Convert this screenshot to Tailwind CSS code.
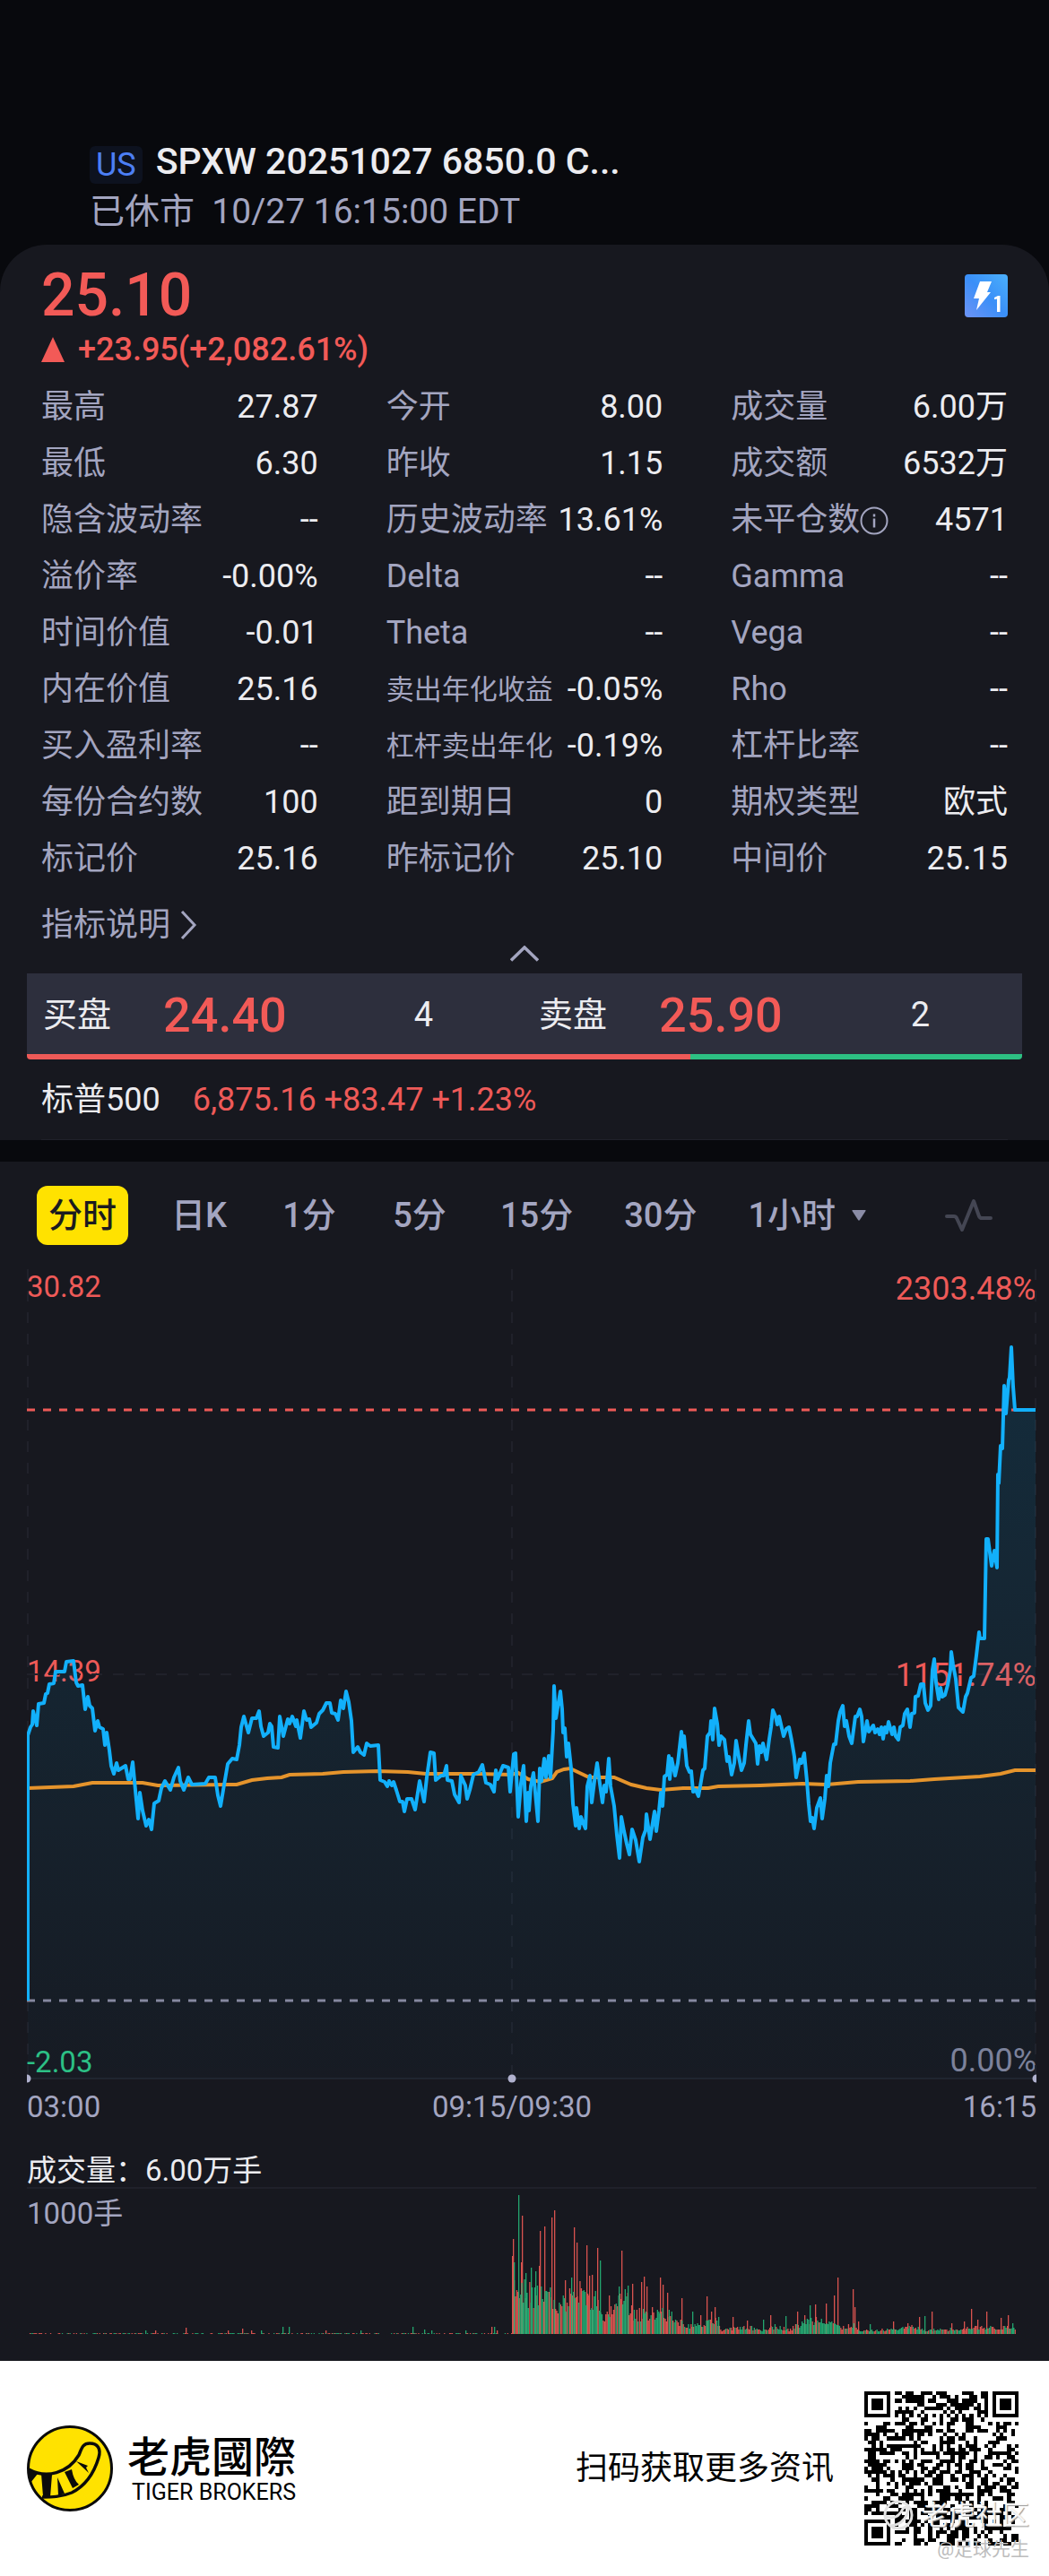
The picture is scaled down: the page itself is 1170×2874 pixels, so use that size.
<!DOCTYPE html>
<html lang="zh-CN">
<head>
    <meta charset="UTF-8">
    <meta name="viewport" content="width=device-width, initial-scale=1.0">
    <title>SPXW 20251027 6850.0 Call</title>
    <script src="https://cdn.jsdelivr.net/npm/@tailwindcss/browser@4"></script>
</head>
<body class="bg-[#08090d] text-[#ececf0] font-['Roboto','Noto_Sans_CJK_SC',sans-serif]">

    <!-- Header -->
    <header class="pt-[155px] pb-[15px] px-[100px]">
        <div class="flex items-end gap-[15px] h-[50px]">
            <span class="flex items-center h-[42px] px-[7px] rounded-md bg-[#0d121f] text-[#4c7ff5] text-[36px]">US</span>
            <h1 class="text-[41px] leading-[50px] font-medium">SPXW 20251027 6850.0 C...</h1>
        </div>
        <p class="mt-[9px] text-[39px] leading-[44px] text-[#a3a5c0] whitespace-pre">已休市  10/27 16:15:00 EDT</p>
    </header>

    <main>
        <!-- Quote card -->
        <section class="rounded-t-[52px] bg-[#17181f] pt-[21px]">
            <div class="px-[46px]">
                <div class="flex items-center justify-between">
                    <p class="text-[66px] leading-[72px] font-medium text-[#f25a57]">25.10</p>
                    <svg class="w-12 h-12" viewBox="0 0 48 48">
                        <defs>
                            <linearGradient id="quoteLevel" x1="0" y1="1" x2="1" y2="0">
                                <stop offset="0" stop-color="#6d93f5"/>
                                <stop offset="0.5" stop-color="#3a8ff8"/>
                                <stop offset="1" stop-color="#4bb0fb"/>
                            </linearGradient>
                        </defs>
                        <rect width="48" height="48" rx="4" fill="url(#quoteLevel)"/>
                        <path d="M17 8h13l-5 12h4L13 40l3-13H10z" fill="#fff"/>
                        <path d="M33 26l4-2h2.500v18H36V27.500l-3 .5z" fill="#fff"/>
                    </svg>
                </div>
                <p class="flex items-center gap-[15px] text-[36px] leading-[48px] font-medium text-[#f25a57]">
                    <svg class="w-[26px] h-7" viewBox="0 0 26 28"><path d="M13 0l13 28H0z" fill="currentColor"/></svg>
                    +23.95(+2,082.61%)
                </p>

                <dl class="mt-[9px] grid grid-cols-3 gap-x-[76px] text-[36px] leading-[63px] whitespace-nowrap [&>div]:flex [&>div]:items-center [&>div]:justify-between [&_dt]:text-[#a3a5c0]">
                    <div><dt>最高</dt><dd>27.87</dd></div>
                    <div><dt>今开</dt><dd>8.00</dd></div>
                    <div><dt>成交量</dt><dd>6.00万</dd></div>
                    <div><dt>最低</dt><dd>6.30</dd></div>
                    <div><dt>昨收</dt><dd>1.15</dd></div>
                    <div><dt>成交额</dt><dd>6532万</dd></div>
                    <div><dt>隐含波动率</dt><dd>--</dd></div>
                    <div><dt>历史波动率</dt><dd>13.61%</dd></div>
                    <div>
                        <dt class="flex items-center">未平仓数
                            <svg class="w-8 h-8" viewBox="0 0 32 32" fill="none" stroke="currentColor" stroke-width="2">
                                <circle cx="16" cy="16" r="14.500"/>
                                <path d="M16 13.500v10M16 8.500v3" stroke-width="2.500"/>
                            </svg>
                        </dt>
                        <dd>4571</dd>
                    </div>
                    <div><dt>溢价率</dt><dd>-0.00%</dd></div>
                    <div><dt>Delta</dt><dd>--</dd></div>
                    <div><dt>Gamma</dt><dd>--</dd></div>
                    <div><dt>时间价值</dt><dd>-0.01</dd></div>
                    <div><dt>Theta</dt><dd>--</dd></div>
                    <div><dt>Vega</dt><dd>--</dd></div>
                    <div><dt>内在价值</dt><dd>25.16</dd></div>
                    <div><dt class="text-[31px]">卖出年化收益</dt><dd>-0.05%</dd></div>
                    <div><dt>Rho</dt><dd>--</dd></div>
                    <div><dt>买入盈利率</dt><dd>--</dd></div>
                    <div><dt class="text-[31px]">杠杆卖出年化</dt><dd>-0.19%</dd></div>
                    <div><dt>杠杆比率</dt><dd>--</dd></div>
                    <div><dt>每份合约数</dt><dd>100</dd></div>
                    <div><dt>距到期日</dt><dd>0</dd></div>
                    <div><dt>期权类型</dt><dd>欧式</dd></div>
                    <div><dt>标记价</dt><dd>25.16</dd></div>
                    <div><dt>昨标记价</dt><dd>25.10</dd></div>
                    <div><dt>中间价</dt><dd>25.15</dd></div>
                </dl>

                <a href="#" class="mt-[19px] inline-flex items-center gap-2.5 h-[46px] text-[36px] leading-[46px] text-[#a3a5c0] align-top">
                    指标说明
                    <svg class="w-5 h-8" viewBox="0 0 20 32" fill="none" stroke="currentColor" stroke-width="3"><path d="M3 1l14 15L3 31"/></svg>
                </a>
            </div>
            <button type="button" aria-label="收起" class="block mx-auto mb-[13px] text-[#a3a5c0]">
                <svg class="block w-8 h-[18px]" viewBox="0 0 32 18" fill="none" stroke="currentColor" stroke-width="3.500"><path d="M1 16.500L16 2l15 14.500"/></svg>
            </button>

            <!-- Bid / ask -->
            <div class="mx-[30px] rounded-b-sm overflow-hidden">
                <div class="grid grid-cols-2 h-[90px] pt-0.5 bg-[#2d2f3d] text-[38px]">
                    <div class="flex items-center pl-[18px]">
                        <span class="w-[134px]">买盘</span>
                        <span class="text-[54px] font-medium text-[#f25a57]">24.40</span>
                        <span class="flex-1 pl-10 text-center">4</span>
                    </div>
                    <div class="flex items-center pl-4">
                        <span class="w-[134px]">卖盘</span>
                        <span class="text-[54px] font-medium text-[#f25a57]">25.90</span>
                        <span class="flex-1 pl-10 text-center">2</span>
                    </div>
                </div>
                <div class="flex h-1.5">
                    <div class="w-2/3 bg-[#ee5a58]"></div>
                    <div class="w-1/3 bg-[#2dc083]"></div>
                </div>
            </div>

            <p class="mx-[46px] flex gap-9 border-b border-[#20212a] pt-0.5 text-[36px] leading-[87px]">
                <span>标普500</span>
                <span class="text-[#ee5a58]">6,875.16 +83.47 +1.23%</span>
            </p>
        </section>

        <!-- Chart -->
        <section class="mt-6 bg-[#17181f] pt-[27px] pb-[30px] pl-[30px] pr-[14px]">
            <nav class="flex items-center justify-between pl-[11px] pr-[49px] text-[38px] font-medium text-[#a3a5c0]">
                <div class="flex items-center gap-[57px]">
                    <button type="button" class="h-[66px] w-[102px] -mr-[11px] rounded-[12px] bg-[#ffe200] text-[#1b1b1f]">分时</button>
                    <button type="button" class="min-w-[66px]">日K</button>
                    <button type="button" class="min-w-[66px]">1分</button>
                    <button type="button" class="min-w-[66px]">5分</button>
                    <button type="button">15分</button>
                    <button type="button">30分</button>
                    <button type="button" class="flex items-center gap-[18px]">1小时
                        <svg class="w-4 h-3" viewBox="0 0 16 12"><path d="M1 0h14q1 0 .5 1L9 11q-1 1.500-2 0L.5 1Q0 0 1 0z" fill="#8a8ca6"/></svg>
                    </button>
                </div>
                <button type="button" aria-label="指标">
                    <svg class="w-[53px] h-9" viewBox="0 0 53 36" fill="none" stroke="#444653" stroke-width="4" stroke-linejoin="round" stroke-linecap="round"><path d="M2 19h8q2 0 3 2l6 13L32 2l6 17q1 2 3 2h10"/></svg>
                </button>
            </nav>

            <div class="relative mt-[27px]">
                <div class="absolute inset-x-0 top-0 bottom-[3px] flex justify-between text-[#ee5a58]">
                    <div class="flex flex-col justify-between text-[33px] leading-[40px]">
                        <span>30.82</span>
                        <span class="pb-2">14.39</span>
                        <span class="text-[#2dc083]">-2.03</span>
                    </div>
                    <div class="flex flex-col justify-between text-right text-[36px] leading-[44px]">
                        <span>2303.48%</span>
                        <span>1151.74%</span>
                        <span class="text-[#7f8199]">0.00%</span>
                    </div>
                </div>
                <svg class="relative block w-full" viewBox="0 0 1126 908" fill="none">
                    <defs>
                        <linearGradient id="areaFill" gradientUnits="userSpaceOnUse" x1="0" y1="87" x2="0" y2="903">
                            <stop offset="0" stop-color="#00aaf0" stop-opacity="0.14"/>
                            <stop offset="1" stop-color="#00aaf0" stop-opacity="0.02"/>
                        </linearGradient>
                    </defs>
                    <g stroke="#20212a" stroke-width="2" stroke-dasharray="12 12">
                        <path d="M1 0V903M541 0V903M1125 0V903M0 452H1126"/>
                    </g>
                    <path d="M0 903H1126" stroke="#20242e" stroke-width="2"/>
                    <path id="area" fill="url(#areaFill)"/>
                    <path d="M0 157H1126" stroke="#ee5a58" stroke-width="3" stroke-dasharray="9 9"/>
                    <path d="M0 816H1126" stroke="#85889f" stroke-width="3" stroke-dasharray="9 9"/>
                    <polyline stroke="#e5942c" stroke-width="4" points="1,579 52,577 73,573 100,573 129,573 146,576 234,575 251,570 268,568 284,567 293,564 330,563 353,561 391,560 425,561 445,563 506,563 540,564 548,562 559,569 573,572 586,568 591,561 599,558 606,557 627,567 655,567 674,575 691,579 707,581 732,579 760,579 771,577 818,576 865,574 892,575 927,572 985,571 1012,569 1063,566 1086,563 1102,559 1125,559"/>
                    <polyline id="price" stroke="#12b0fb" stroke-width="4" stroke-linejoin="round" points="1,816 1,520 4,511 6,508 7,493 11,509 13,485 19,484 21,474 23,473 25,463 30,462 32,449 42,449 44,438 52,437 55,461 57,465 62,464 65,491 68,477 70,487 73,490 76,515 79,504 81,511 85,513 87,531 89,517 92,537 94,554 97,563 100,551 102,559 110,554 113,569 115,569 118,550 120,571 124,613 126,584 129,604 133,621 136,614 139,625 142,596 147,593 150,579 154,571 160,581 164,567 169,556 171,571 175,581 180,567 184,575 199,574 203,567 210,567 213,587 216,599 219,581 224,552 229,546 234,547 237,531 239,511 242,499 247,517 251,501 256,501 259,493 261,510 264,521 269,517 271,507 273,510 275,533 280,534 282,499 286,521 291,502 293,507 296,499 300,510 301,503 305,523 309,493 312,503 315,502 317,511 323,506 326,496 330,492 334,484 338,484 340,495 344,496 347,503 350,481 353,490 356,471 359,483 362,504 364,539 369,533 372,539 376,542 379,529 383,532 392,531 394,570 399,572 402,577 404,571 407,576 409,572 412,581 416,594 419,594 421,605 424,591 429,591 433,603 438,571 443,594 446,567 450,539 454,540 456,570 462,565 465,565 468,554 469,570 474,571 477,586 482,595 484,565 489,576 491,591 494,581 498,564 504,561 508,553 512,573 517,575 521,583 523,559 525,569 531,554 537,556 539,583 543,541 545,540 548,611 551,574 554,554 557,616 559,584 560,604 562,577 565,562 570,616 572,557 574,571 577,546 579,567 582,543 584,567 587,514 588,465 590,501 595,471 597,491 598,517 600,512 602,544 604,529 607,557 609,596 612,621 613,601 616,624 618,611 620,617 623,624 625,577 628,565 630,595 633,571 636,551 639,574 642,595 644,576 646,583 649,546 651,577 655,599 658,631 661,657 663,611 666,627 669,641 672,653 675,625 679,637 683,661 687,634 690,626 691,608 695,636 700,605 702,627 705,604 707,584 709,599 711,566 714,564 716,543 717,569 719,546 723,565 726,551 730,516 732,533 733,521 736,554 739,561 741,560 743,583 746,581 749,588 752,571 754,559 756,557 759,521 762,517 763,504 765,525 767,490 770,507 772,531 774,521 778,525 781,549 783,544 786,564 789,551 791,526 794,544 797,559 800,551 802,531 805,504 807,519 810,524 813,529 815,552 817,532 819,539 821,529 825,547 828,524 830,511 832,492 835,499 837,508 839,499 844,521 847,513 850,511 853,526 856,544 858,567 862,547 864,551 867,540 870,571 872,597 874,616 876,612 878,624 881,601 885,590 887,613 890,591 892,565 894,577 896,551 900,530 902,530 905,504 907,494 910,487 912,510 914,504 917,521 920,529 924,499 926,499 929,491 931,499 933,527 937,504 939,516 944,509 946,517 949,513 951,519 953,511 955,524 957,511 959,517 961,505 965,519 967,511 969,521 972,525 974,511 977,509 979,496 982,491 985,511 987,496 990,495 991,477 994,476 997,463 1000,463 1002,484 1005,492 1008,487 1010,447 1012,435 1014,461 1017,480 1019,467 1021,477 1024,475 1027,464 1030,447 1031,427 1033,441 1036,457 1039,489 1044,494 1047,477 1049,473 1053,456 1056,454 1059,431 1062,405 1063,412 1068,412 1070,301 1072,301 1076,331 1079,314 1082,333 1083,229 1084,239 1086,197 1088,200 1090,130 1092,161 1095,124 1096,121 1098,87 1100,131 1102,157 1125,157"/>
                    <g fill="#b0b1ce">
                        <circle cx="0" cy="903" r="4.500"/>
                        <circle cx="541" cy="903" r="4.500"/>
                        <circle cx="1126" cy="903" r="4.500"/>
                    </g>
                </svg>
            </div>

            <div class="mt-[7px] grid grid-cols-[1fr_auto_1fr] text-[33px] leading-[40px] text-[#a3a5c0]">
                <span>03:00</span>
                <span class="pr-[44px]">09:15/09:30</span>
                <span class="text-right">16:15</span>
            </div>

            <p class="mt-[33px] border-b-2 border-[#20212a] text-[33px] leading-[36px]">成交量：6.00万手</p>
            <div class="relative">
                <span class="absolute top-2 left-0 text-[33px] leading-[40px] text-[#a3a5c0]">1000手</span>
                <svg id="volume" class="relative block w-full" viewBox="0 0 1126 162"></svg>
            </div>
        </section>
    </main>

    <!-- Share footer -->
    <footer class="relative flex items-center justify-between h-[240px] pl-[30px] pr-[34px] bg-white text-black">
        <div class="flex items-center gap-4">
            <svg class="w-24 h-24" viewBox="0 0 96 96">
                <circle cx="48" cy="48" r="46.500" fill="#ffe200" stroke="#0b0b0b" stroke-width="3"/>
                <path d="M2 49C22 60 46 53 58 33C61 26 62 20 70 20C79 20 83 26 80 36C74 56 64 68 50 75C38 80 27 80 17 80" fill="none" stroke="#0b0b0b" stroke-width="3.500"/>
                <path d="M2 49L12 54L4 64zM16 54L28 55L26 80L18 79zM34 58L42 76L35 78zM42 52L50 49Q52 61 58 66L51 70zM55 40L68 45L66 47L69 53z" fill="#0b0b0b"/>
            </svg>
            <div class="text-right">
                <p class="text-[47px] leading-[54px] font-medium font-['Noto_Sans_CJK_TC',sans-serif]">老虎國際</p>
                <p class="text-[25px] leading-[32px]">TIGER BROKERS</p>
            </div>
        </div>
        <div class="flex items-center gap-[34px]">
            <p class="text-[36px]">扫码获取更多资讯</p>
            <svg id="qr" class="w-[172px] h-[172px]" viewBox="0 0 41 41" shape-rendering="crispEdges"></svg>
        </div>
        <div class="absolute right-[22px] bottom-[14px] flex flex-col items-end text-[#bdbdbd]">
            <p class="flex items-center gap-2 text-[30px] leading-[36px] text-white/90 [text-shadow:1px_1px_1px_#999]">
                <svg class="w-9 h-9" viewBox="0 0 36 36" fill="none" stroke="#e3e3e3" stroke-width="3"><circle cx="18" cy="18" r="15"/><path d="M4 20c10 3 16-2 19-9 3-4 7 0 5 5-3 8-9 13-18 14"/></svg>
                老虎社区
            </p>
            <p class="mt-1 text-[21px] leading-[32px]">@足球先生</p>
        </div>
    </footer>

    <script>
        // close the price line down to the time axis
        const line = document.getElementById('price').getAttribute('points').split(' ').slice(1);
        document.getElementById('area').setAttribute('d', 'M1 903L' + line.join('L') + 'V903Z');

        let seed = 20251027;
        function rand() {
            seed = (seed * 1103515245 + 12345) % 2147483648;
            return seed / 2147483648;
        }

        // volume: average level by x, then the single spikes [x, height, up]
        const level = [[0, 1], [540, 1], [541, 62], [570, 54], [582, 58], [590, 30], [598, 44], [612, 60], [634, 50], [642, 16], [655, 42], [668, 52], [676, 26], [700, 32], [716, 26], [726, 18], [735, 11], [755, 13], [768, 20], [773, 5], [800, 10], [818, 6], [835, 11], [850, 6], [868, 18], [884, 22], [900, 16], [908, 7], [920, 14], [927, 4], [960, 6], [990, 10], [1000, 5], [1030, 7], [1060, 9], [1102, 9]];
        const spikes = [[132, 4, 0], [143, 4, 1], [177, 7, 1], [224, 4, 1], [240, 6, 1], [250, 4, 1], [261, 4, 0], [285, 8, 0], [292, 8, 0], [333, 4, 1], [372, 4, 0], [430, 8, 0], [443, 5, 0], [451, 4, 0], [489, 4, 0], [518, 8, 1], [521, 8, 0], [524, 4, 1],
            [541, 87, 1], [542, 106, 1], [543, 80, 0], [548, 155, 0], [551, 80, 1], [552, 132, 1], [556, 68, 0], [562, 74, 0], [567, 70, 0], [571, 76, 1], [572, 115, 1], [577, 120, 1], [585, 130, 1], [588, 138, 1], [600, 60, 1], [607, 63, 0], [610, 119, 1], [613, 102, 1], [624, 99, 1], [627, 65, 1], [630, 66, 1], [636, 96, 1], [639, 82, 0], [649, 43, 1], [660, 53, 0], [663, 93, 1], [670, 54, 0], [675, 56, 1], [685, 58, 1], [688, 64, 1], [691, 53, 1], [706, 63, 1], [709, 55, 1], [714, 46, 1], [730, 40, 1], [742, 25, 0], [751, 21, 1], [758, 42, 1], [763, 25, 1], [767, 30, 1], [771, 19, 0], [787, 19, 1], [803, 15, 1], [821, 16, 0], [829, 21, 1], [846, 20, 0], [859, 25, 1], [867, 21, 1], [873, 32, 0], [879, 33, 1], [891, 34, 1], [900, 43, 1], [904, 63, 1], [921, 50, 1], [923, 30, 1], [927, 14, 1], [940, 11, 0], [966, 14, 1], [982, 12, 1], [995, 19, 1], [1001, 20, 0], [1009, 25, 1], [1031, 12, 1], [1045, 14, 1], [1053, 28, 1], [1060, 16, 1], [1070, 25, 1], [1086, 18, 1], [1094, 21, 1], [1099, 12, 0]];

        let up = '', down = '';
        function bar(x, h, isUp) {
            const d = 'M' + x + ' 162v-' + h + 'h1.3v' + h + 'z';
            if (isUp) up += d; else down += d;
        }
        let k = 0;
        for (let i = 0; i < 766; i++) {
            const x = i * 1.44;
            while (level[k + 1] && level[k + 1][0] <= x) k++;
            const a = level[k], b = level[k + 1] || a;
            const t = b === a ? 0 : (x - a[0]) / (b[0] - a[0]);
            const avg = x < 541 ? 1 : a[1] + (b[1] - a[1]) * t;
            if (x < 541 && rand() < 0.5) continue;
            bar(x.toFixed(1), Math.max(1, Math.round(avg * (0.5 + rand() * 0.55))), rand() < 0.5);
        }
        spikes.forEach(s => bar(s[0], s[1], s[2]));
        document.getElementById('volume').innerHTML = '<path fill="#d9534f" d="' + up + '"/><path fill="#25b578" fill-opacity="0.9" d="' + down + '"/>';

        // QR code, 41 x 41 modules
        function finder(x, y, left, top) {
            const dx = x - left, dy = y - top;
            if (dx < -1 || dy < -1 || dx > 7 || dy > 7) return null;
            const r = Math.max(Math.abs(dx - 3), Math.abs(dy - 3));
            return r === 3 || r < 2;
        }
        let modules = '';
        for (let y = 0; y < 41; y++) {
            for (let x = 0; x < 41; x++) {
                let on = rand() < 0.5;
                if (y === 6) on = x % 2 === 0;
                if (x === 6) on = y % 2 === 0;
                const r = Math.max(Math.abs(x - 34), Math.abs(y - 34));
                if (r < 3) on = r !== 1;
                [[0, 0], [34, 0], [0, 34]].forEach(p => {
                    const f = finder(x, y, p[0], p[1]);
                    if (f !== null) on = f;
                });
                if (on) modules += 'M' + x + ' ' + y + 'h1v1h-1z';
            }
        }
        document.getElementById('qr').innerHTML = '<path d="' + modules + '"/>';
    </script>
</body>
</html>
